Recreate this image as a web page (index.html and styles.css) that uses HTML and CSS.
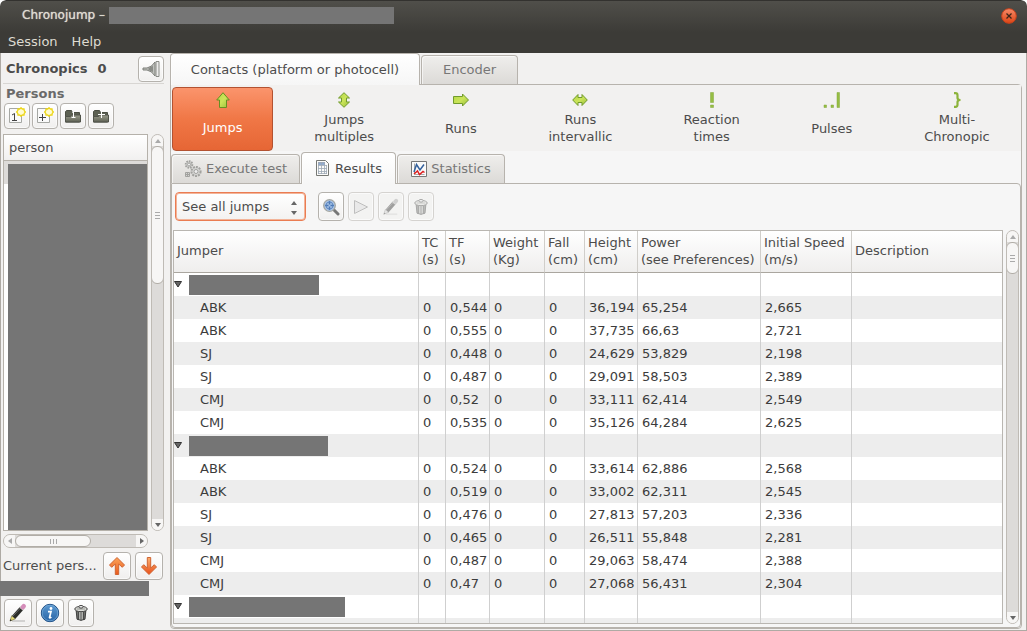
FILE: index.html
```
<!DOCTYPE html>
<html lang="en">
<head>
<meta charset="utf-8">
<title>Chronojump</title>
<link rel="stylesheet" href="styles.css">
</head>
<body>
<svg class="defs" aria-hidden="true">
  <defs>
    <linearGradient id="green" x1="0" y1="0" x2="1" y2="1"><stop offset="0" stop-color="#b2d843"/><stop offset=".5" stop-color="#cbe45a"/><stop offset="1" stop-color="#97bd38"/></linearGradient>
    <linearGradient id="orange" x1="0" y1="0" x2="0" y2="1"><stop offset="0" stop-color="#fba45a"/><stop offset="1" stop-color="#ea5a1c"/></linearGradient>
    <linearGradient id="orange-down" x1="0" y1="0" x2="0" y2="1"><stop offset="0" stop-color="#fcb070"/><stop offset="1" stop-color="#e8501a"/></linearGradient>
    <linearGradient id="close" x1="0" y1="0" x2="0" y2="1"><stop offset="0" stop-color="#f68a68"/><stop offset="1" stop-color="#dc4414"/></linearGradient>
    <linearGradient id="folder" x1="0" y1="0" x2="0" y2="1"><stop offset="0" stop-color="#9b9d8d"/><stop offset="1" stop-color="#5f6254"/></linearGradient>
    <linearGradient id="blue" x1="0" y1="0" x2="0" y2="1"><stop offset="0" stop-color="#5c9ad2"/><stop offset="1" stop-color="#2763a5"/></linearGradient>
    <linearGradient id="metal" x1="0" y1="0" x2="1" y2="0"><stop offset="0" stop-color="#555753"/><stop offset=".5" stop-color="#d8dad6"/><stop offset="1" stop-color="#555753"/></linearGradient>
    <symbol id="star" viewBox="0 0 10 10"><path d="M5 .8 6.3 2 8 1.9 8.2 3.6 9.3 5 8.2 6.4 8 8.1 6.3 8 5 9.2 3.7 8 2 8.1 1.8 6.4.7 5 1.8 3.6 2 1.9 3.7 2Z" fill="#fffbd0" stroke="#ecd514" stroke-width="1.3"/></symbol>
    <symbol id="trash" viewBox="0 0 18 20"><path d="M3.5 7h11l-1 10q-4.500 2.500-9 0z" fill="url(#metal)" stroke="#333" /><path d="M6 8.500v9M9 9v9.500M12 8.500v9" stroke="#333"/><ellipse cx="9" cy="5.500" rx="7" ry="3" fill="#dfe0dc" stroke="#333"/><path d="M4 5.500h10" stroke="#888a85"/><ellipse cx="9" cy="3" rx="2.500" ry="1.500" fill="#eee" stroke="#333"/></symbol>
    <symbol id="pencil" viewBox="0 0 20 20"><path d="M4 18h13" stroke="#0002" stroke-width="2"/><path d="M5.500 14.500 13.500 5.500" stroke="#2b2d2a" stroke-width="4.500"/><path d="M4.800 13.300 12.500 5" stroke="#666" stroke-width="1"/><path d="M13 6.100 14.500 4.400" stroke="#c9cbc7" stroke-width="4.500"/><path d="m14.800 4.200.9-1" stroke="#d58dba" stroke-width="4.500" stroke-linecap="round"/><path d="m2 18 1.700-5.200 3.500 3.100z" fill="#e8dc72" stroke="#77744a" stroke-width=".7"/><path d="m1.800 18.300.7-2 1.300 1z" fill="#222"/></symbol>
    <symbol id="open-folder" viewBox="0 0 18 18"><path d="M1.500 15v-10.500l1-1h5l1 2h7v9.500z" fill="#5d6153" stroke="#4b4e43"/><path d="M1.500 9.500h5l1-1.500h9v7h-15z" fill="url(#folder)" stroke="#50534a"/></symbol>
  </defs>
</svg>

<header class="chrome">
  <div class="titlebar">
    <span class="title">Chronojump –</span><span class="redacted redacted-title"></span>
    <button class="close" aria-label="Close"><svg width="16" height="16" viewBox="0 0 16 16"><circle cx="8" cy="8" r="7.300" fill="url(#close)" stroke="#c9421c"/><path d="m5.500 5.500 5 5m0-5-5 5" stroke="#3c2419" stroke-width="1.300"/></svg></button>
  </div>
  <nav class="menubar"><button>Session</button><button>Help</button></nav>
</header>

<main class="main">
  <aside class="side">
    <div class="chronopics">
      <strong>Chronopics</strong><strong>0</strong>
      <button class="btn" aria-label="Chronopic connection"><svg width="18" height="18" viewBox="0 0 18 18"><path d="M1 8h4q5-1 8-6v14q-3-5-8-6H1z" fill="#bfc1bd" stroke="#7c7e79"/><path d="M6 9q2-3 5-3v6q-3 0-5-3z" fill="#8a8c87"/><path d="M14 1.500h3v15h-3z" fill="#ececeb" stroke="#8a8c87"/></svg></button>
    </div>
    <h2 class="persons">Persons</h2>
    <div class="person-tools">
      <button class="btn" aria-label="New person"><svg width="18" height="18" viewBox="0 0 18 18"><path d="M1.500 1.500h12v14h-12z" fill="#fafafa" stroke="#a5a7a3"/><path d="M4 8 6.500 6.500v7M4 13.500h5" fill="none" stroke="#444"/><use href="#star" x="8" y="0" width="10" height="10"/></svg></button>
      <button class="btn" aria-label="New persons"><svg width="18" height="18" viewBox="0 0 18 18"><path d="M1.500 1.500h12v14h-12z" fill="#fafafa" stroke="#a5a7a3"/><path d="M6.500 7v7M3 10.500h7" stroke="#444"/><use href="#star" x="8" y="0" width="10" height="10"/></svg></button>
      <button class="btn" aria-label="Load person"><svg width="18" height="18" viewBox="0 0 18 18"><use href="#open-folder"/><path d="M8 5.500 9.500 4.500v6M7.500 10.500h4" fill="none" stroke="#fff"/></svg></button>
      <button class="btn" aria-label="Load persons"><svg width="18" height="18" viewBox="0 0 18 18"><use href="#open-folder"/><path d="M9.500 4v7M6 7.500h7" stroke="#fff"/></svg></button>
    </div>
    <div class="person-area">
      <div class="person-list"><div class="list-head">person</div><div class="list-body"><span class="redacted"></span></div></div>
      <div class="scroll scroll-v"><i class="step"><svg width="6" height="4"><path d="m0 4 3-4 3 4z"/></svg></i><div class="thumb thumb-long"></div><i class="step end"><svg width="6" height="4"><path d="m0 0 3 4 3-4z"/></svg></i></div>
      <div class="scroll scroll-h"><i class="step"><svg width="4" height="6"><path d="M4 0 0 3l4 3z"/></svg></i><div class="thumb"></div><i class="step end"><svg width="4" height="6"><path d="m0 0 4 3-4 3z"/></svg></i></div>
    </div>
    <div class="current">
      <span>Current pers...</span>
      <button class="btn" aria-label="Previous person"><svg width="18" height="20" viewBox="0 0 18 20"><path d="M9 1.500 1.500 9l2.200 2.300L7.300 8v10.500h3.400V8l3.600 3.300L16.500 9z" fill="url(#orange)" stroke="#cf6432" stroke-linejoin="round"/></svg></button>
      <button class="btn" aria-label="Next person"><svg width="18" height="20" viewBox="0 0 18 20"><path d="M9 18.500 1.500 11l2.200-2.300L7.300 12V1.500h3.400V12l3.600-3.300L16.500 11z" fill="url(#orange-down)" stroke="#cf6432" stroke-linejoin="round"/></svg></button>
    </div>
    <span class="redacted redacted-name"></span>
    <div class="person-actions">
      <button class="btn" aria-label="Edit person"><svg width="20" height="20"><use href="#pencil"/></svg></button>
      <button class="btn" aria-label="Person information"><svg width="20" height="20" viewBox="0 0 20 20"><circle cx="10" cy="10" r="8.700" fill="url(#blue)" stroke="#1e4f87"/><circle cx="10" cy="10" r="7.800" fill="none" stroke="#79add9" stroke-width=".7"/><circle cx="11" cy="5.500" r="1.400" fill="#fff"/><path d="M8 8.700h3L9.500 14.500q.500.800 1.800-.5" fill="none" stroke="#fff" stroke-width="1.700"/></svg></button>
      <button class="btn" aria-label="Delete person"><svg width="16" height="18"><use href="#trash"/></svg></button>
    </div>
  </aside>

  <section class="book">
    <div class="tabs" role="tablist">
      <button class="tab active tab-contacts" role="tab">Contacts (platform or photocell)</button>
      <button class="tab tab-encoder" role="tab">Encoder</button>
    </div>
    <div class="page">
      <fieldset class="modes" aria-label="Test type">
        <label class="mode"><input type="radio" name="mode" checked><svg width="16" height="16" viewBox="0 0 16 16"><path d="M8 .700 14.300 8H11.500v7.500h-7V8H1.700z" fill="url(#green)" stroke="#668f22"/></svg><span>Jumps</span></label>
        <label class="mode"><input type="radio" name="mode"><svg width="16" height="16" viewBox="0 0 16 16"><path d="M8 .700 13.500 6h-3v4h3L8 15.300 2.500 10h3V6h-3z" fill="url(#green)" stroke="#719b2d"/></svg><span>Jumps<br>multiples</span></label>
        <label class="mode"><input type="radio" name="mode"><svg width="16" height="16" viewBox="0 0 16 16"><path d="M15.500 8 9.500 14v-2.500h-9v-7h9V2z" fill="url(#green)" stroke="#719b2d"/></svg><span>Runs</span></label>
        <label class="mode"><input type="radio" name="mode"><svg width="16" height="16" viewBox="0 0 16 16"><path d="M.7 8 6 2.500v3h4v-3L15.300 8 10 13.500v-3H6v3z" fill="url(#green)" stroke="#719b2d"/></svg><span>Runs<br>intervallic</span></label>
        <label class="mode"><input type="radio" name="mode"><svg width="16" height="16" viewBox="0 0 16 16"><path d="M6.500.500h3v10h-3zM6.500 13h3v2.500h-3z" fill="#96bd43" stroke="#83a93a" stroke-width=".5"/></svg><span>Reaction<br>times</span></label>
        <label class="mode"><input type="radio" name="mode"><svg width="18" height="16" viewBox="0 0 18 16"><path d="M1 13h2.500v2.500H1zM8 13h2.500v2.500H8zM14 .500h2.500v15H14z" fill="#96bd43" stroke="#83a93a" stroke-width=".5"/></svg><span>Pulses</span></label>
        <label class="mode"><input type="radio" name="mode"><svg width="16" height="16" viewBox="0 0 16 16"><path d="M5 1.200h1.500q2 0 2 2V6q0 2 3 2-3 0-3 2v2.800q0 2-2 2H5" fill="none" stroke="#8cb33b" stroke-width="2.200"/></svg><span>Multi-<br>Chronopic</span></label>
      </fieldset>

      <div class="tabs subtabs" role="tablist">
        <button class="tab tab-execute" role="tab"><svg width="18" height="18" viewBox="0 0 18 18"><g fill="#d4d4d2" stroke="#a2a29f"><circle cx="5" cy="4.500" r="3.300" stroke-width="2" stroke-dasharray="1.600 .900"/><circle cx="5" cy="4.500" r="1.500" fill="#eee"/><circle cx="12" cy="11.500" r="4.600" stroke-width="2" stroke-dasharray="2 1"/><circle cx="12" cy="11.500" r="2" fill="#eee"/><path d="M1.500 12.500h4v4h-4zM1.500 14.500h4M3.500 12.500v4" /></g></svg>Execute test</button>
        <button class="tab active tab-results" role="tab"><svg width="16" height="18" viewBox="0 0 16 18"><path d="M1.500 1.500h9l3 3v12h-12z" fill="#fbfbfa" stroke="#777975"/><path d="M3 3h7v3H3z" fill="#91abd0"/><path d="M3 3.500h7M3 6.500h9M3 9.500h9M3 12.500h9M3 14.500h9M3.500 3v12M6.500 3v12M9.500 3v12M11.500 6v9" stroke="#9da8b5" stroke-width=".8"/></svg>Results</button>
        <button class="tab tab-statistics" role="tab"><svg width="16" height="16" viewBox="0 0 16 16"><path d="M.5.500h15v15H.500z" fill="#fafafa" stroke="#777"/><path d="M3.500 2.500v11h10" fill="none" stroke="#aaa"/><path d="M3 11 5.500 3.500 9 9l4-5.500" fill="none" stroke="#34619d" stroke-width="1.500"/><path d="m3 13 3.500-3 2 3.500 3.500-3 1.500 1" fill="none" stroke="#dd1e1e" stroke-width="1.500"/></svg>Statistics</button>
      </div>

      <div class="subpage">
        <div class="toolbar">
          <div class="combo"><select aria-label="Jump type"><option>See all jumps</option></select><svg width="6" height="14" viewBox="0 0 6 14"><path d="m0 4 3-4 3 4zM0 10l3 4 3-4z" fill="#666"/></svg></div>
          <button class="btn" aria-label="Zoom"><svg width="18" height="18" viewBox="0 0 18 18"><path d="m12 12 4 4" stroke="#777" stroke-width="3" stroke-linecap="round"/><circle cx="7.500" cy="7.500" r="5.800" fill="#a9c4e8" stroke="#a5a7a2" stroke-width="1.300"/><path d="M7.500 3v9M3 7.500h9" stroke="#4a78b5" stroke-width="1.500" stroke-dasharray="3.500 2"/><circle cx="7.500" cy="7.500" r="3.500" fill="none" stroke="#5f88bf"/></svg></button>
          <button class="btn" disabled aria-label="Play"><svg width="18" height="18" viewBox="0 0 18 18"><path d="m2.500 2.500 13 6.500-13 6.500z" fill="#ddd" stroke="#777" stroke-linejoin="round"/></svg></button>
          <button class="btn" disabled aria-label="Edit"><svg class="grey" width="18" height="18"><use href="#pencil"/></svg></button>
          <button class="btn" disabled aria-label="Delete"><svg width="16" height="18"><use href="#trash"/></svg></button>
        </div>
        <div class="results">
          <div class="table-wrap">
            <table>
              <colgroup><col class="c-jumper"><col class="c-tc"><col class="c-tf"><col class="c-weight"><col class="c-fall"><col class="c-height"><col class="c-power"><col class="c-speed"><col></colgroup>
              <thead><tr><th>Jumper</th><th>TC<br>(s)</th><th>TF<br>(s)</th><th>Weight<br>(Kg)</th><th>Fall<br>(cm)</th><th>Height<br>(cm)</th><th>Power<br>(see Preferences)</th><th>Initial Speed<br>(m/s)</th><th>Description</th></tr></thead>
              <tbody>
                <tr class="group"><td><div><svg width="8" height="7"><path d="M.5.500h7L4 6z"/></svg><span class="redacted r1"></span></div></td><td></td><td></td><td></td><td></td><td></td><td></td><td></td><td></td></tr>
                <tr><td>ABK</td><td>0</td><td>0,544</td><td>0</td><td>0</td><td>36,194</td><td>65,254</td><td>2,665</td><td></td></tr>
                <tr><td>ABK</td><td>0</td><td>0,555</td><td>0</td><td>0</td><td>37,735</td><td>66,63</td><td>2,721</td><td></td></tr>
                <tr><td>SJ</td><td>0</td><td>0,448</td><td>0</td><td>0</td><td>24,629</td><td>53,829</td><td>2,198</td><td></td></tr>
                <tr><td>SJ</td><td>0</td><td>0,487</td><td>0</td><td>0</td><td>29,091</td><td>58,503</td><td>2,389</td><td></td></tr>
                <tr><td>CMJ</td><td>0</td><td>0,52</td><td>0</td><td>0</td><td>33,111</td><td>62,414</td><td>2,549</td><td></td></tr>
                <tr><td>CMJ</td><td>0</td><td>0,535</td><td>0</td><td>0</td><td>35,126</td><td>64,284</td><td>2,625</td><td></td></tr>
                <tr class="group"><td><div><svg width="8" height="7"><path d="M.5.500h7L4 6z"/></svg><span class="redacted r2"></span></div></td><td></td><td></td><td></td><td></td><td></td><td></td><td></td><td></td></tr>
                <tr><td>ABK</td><td>0</td><td>0,524</td><td>0</td><td>0</td><td>33,614</td><td>62,886</td><td>2,568</td><td></td></tr>
                <tr><td>ABK</td><td>0</td><td>0,519</td><td>0</td><td>0</td><td>33,002</td><td>62,311</td><td>2,545</td><td></td></tr>
                <tr><td>SJ</td><td>0</td><td>0,476</td><td>0</td><td>0</td><td>27,813</td><td>57,203</td><td>2,336</td><td></td></tr>
                <tr><td>SJ</td><td>0</td><td>0,465</td><td>0</td><td>0</td><td>26,511</td><td>55,848</td><td>2,281</td><td></td></tr>
                <tr><td>CMJ</td><td>0</td><td>0,487</td><td>0</td><td>0</td><td>29,063</td><td>58,474</td><td>2,388</td><td></td></tr>
                <tr><td>CMJ</td><td>0</td><td>0,47</td><td>0</td><td>0</td><td>27,068</td><td>56,431</td><td>2,304</td><td></td></tr>
                <tr class="group"><td><div><svg width="8" height="7"><path d="M.5.500h7L4 6z"/></svg><span class="redacted r3"></span></div></td><td></td><td></td><td></td><td></td><td></td><td></td><td></td><td></td></tr>
                <tr><td></td><td></td><td></td><td></td><td></td><td></td><td></td><td></td><td></td></tr>
              </tbody>
            </table>
          </div>
          <div class="scroll scroll-v"><i class="step"><svg width="6" height="4"><path d="m0 4 3-4 3 4z"/></svg></i><div class="thumb thumb-short"></div><i class="step end"><svg width="6" height="4"><path d="m0 0 3 4 3-4z"/></svg></i></div>
        </div>
      </div>
    </div>
  </section>
</main>
</body>
</html>
```
FILE: styles.css
```
* { box-sizing: border-box; }
html { background: #fff; }
body {
  margin: 0;
  height: 100vh;
  display: flex;
  flex-direction: column;
  overflow: hidden;
  background: #f2f1f0;
  border-radius: 6px 6px 0 0;
  color: #4c4c4c;
  font: 13px/17px "DejaVu Sans", sans-serif;
}
button, select, input { font: inherit; color: inherit; }
button { padding: 0; border: 0; background: none; white-space: nowrap; }
svg { display: block; flex: none; }
.defs { position: absolute; width: 0; height: 0; }
.redacted { display: block; background: #757575; }

/* window chrome */
.chrome {
  flex: none;
  height: 53px;
  background: linear-gradient(#504f4a, #3c3b37 60%);
  border-top: 1px solid #33322f;
  border-radius: 6px 6px 0 0;
  color: #dfdbd2;
}
.titlebar { display: flex; align-items: center; height: 29px; padding: 0 10px 0 22px; }
.title { width: 87px; font-size: 12px; text-shadow: 0 0 1px #dfdbd2; }
.redacted-title { width: 285px; height: 17px; }
.close { margin-left: auto; }
.menubar { display: flex; gap: 14px; padding: 3px 8px; }

/* window body */
.main {
  flex: 1;
  min-height: 0;
  display: flex;
  border: solid #aeaaa4;
  border-width: 0 1px 1px;
}
.side { flex: none; width: 169px; display: flex; flex-direction: column; padding: 1px 6px 3px 2px; }
.btn {
  flex: none;
  display: grid;
  place-items: center;
  width: 26px;
  height: 26px;
  border: 1px solid #b5b2ad;
  border-radius: 4px;
  background: linear-gradient(#fff, #f0efee);
  box-shadow: inset 0 0 0 1px #fff9;
}
.btn:disabled { border-color: #d5d3d0; background: #f3f3f2; }
.btn:disabled svg { opacity: .42; }
.grey { filter: grayscale(1); }
.chronopics { display: flex; align-items: center; gap: 10px; height: 30px; padding: 0 0 0 3px; border-bottom: 1px solid #d8d6d3; }
.chronopics .btn { margin-left: auto; }
.persons { margin: 1px 3px; font-size: 13px; color: #6a6a6a; }
.person-tools { display: flex; gap: 2px; padding: 0 1px 5px; }
.person-area { flex: 1; min-height: 0; display: grid; grid-template: minmax(0, 1fr) 14px / minmax(0, 1fr) 13px; gap: 3px; }
.person-list { display: flex; flex-direction: column; border: 1px solid #b5b1aa; background: #fff; }
.list-head { padding: 4px 5px; border-bottom: 1px solid #b5b1aa; background: linear-gradient(#fff, #f1f0ef); }
.list-body { flex: 1; padding: 3px 0 0 4px; background: linear-gradient(#dddbd9 23px, #fff 23px); }
.list-body .redacted { height: 100%; }

.scroll { display: flex; border: 1px solid #bfbbb5; border-radius: 7px; background: #dddbd9; overflow: hidden; }
.scroll-v { flex-direction: column; width: 13px; }
.scroll-h { height: 14px; }
.step { flex: none; display: grid; place-items: center; width: 11px; height: 11px; background: #f7f6f5; }
.step svg { fill: #aaa; }
.end svg { fill: #666; }
.thumb { flex: none; border: 1px solid #b1ada7; border-radius: 6px; background: #f7f6f5 repeating-linear-gradient(#aaa 0 1px, transparent 1px 3px) center / 5px 7px no-repeat; }
.scroll-v .thumb { width: 13px; margin: 0 -1px; }
.scroll .end { margin-top: auto; }
.scroll-h .end { margin: 0 0 0 auto; }
.scroll-h .thumb { width: 76px; background-image: repeating-linear-gradient(90deg, #aaa 0 1px, transparent 1px 3px); background-size: 7px 5px; }
.scroll-h .step { height: 12px; }
.thumb-long { height: 138px; }
.thumb-short { height: 32px; }

.current { display: flex; align-items: center; gap: 4px; padding: 4px 1px 0 0; }
.current span { flex: 1; padding-bottom: 2px; white-space: nowrap; }
.current .btn, .person-actions .btn { width: 28px; height: 28px; }
.redacted-name { width: 149px; height: 15px; margin: 1px 0 3px -3px; }
.person-actions { display: flex; gap: 4px; padding: 0 1px; }
.person-actions .btn:last-child { width: 26px; }

/* notebook */
.book { flex: 1; min-width: 0; display: flex; flex-direction: column; padding: 0 4px 1px 0; }
.tabs { position: relative; z-index: 1; display: flex; align-items: flex-end; gap: 1px; flex: none; }
.tab {
  display: flex;
  align-items: center;
  justify-content: center;
  gap: 4px;
  height: 29px;
  padding-bottom: 1px;
  border: 1px solid #b7b3ad;
  border-bottom: 0;
  border-radius: 4px 4px 0 0;
  background: linear-gradient(#efeeec, #dcdad7);
  color: #777;
  box-shadow: inset 1px 1px #fff9;
}
.tab.active { height: 32px; margin-bottom: -1px; background: linear-gradient(#fff, #f6f6f6); color: #4c4c4c; }
.tab-contacts { width: 250px; }
.tab-encoder { width: 97px; }
.page {
  flex: 1;
  min-height: 0;
  display: flex;
  flex-direction: column;
  border: 1px solid #b7b3ad;
  border-radius: 0 4px 4px 4px;
  background: #f6f6f6;
}
.modes {
  display: grid;
  grid-template-columns: 101fr 142fr 91fr 148fr 114fr 126fr 124fr;
  flex: none;
  min-width: 0;
  margin: 0;
  padding: 2px 2px 0 1px;
  border: 0;
  background: #f2f1f0;
}
.mode { display: flex; flex-direction: column; align-items: center; height: 64px; padding-top: 5px; border-radius: 4px; text-align: center; }
.mode input { position: absolute; opacity: 0; margin: 0; }
.mode span { flex: 1; display: flex; align-items: center; padding-bottom: 3px; }
.mode:has(:checked) { border: 1px solid #b35231; padding-top: 4px; background: linear-gradient(#fb946c, #f07746 50%, #e66635); color: #fff; }
.subtabs { padding-top: 1px; }
.tab-execute { width: 129px; }
.tab-results { width: 95px; }
.tab-statistics { width: 108px; }
.subpage {
  flex: 1;
  min-height: 0;
  display: flex;
  flex-direction: column;
  padding: 8px 1px 3px;
  border: 1px solid #b7b3ad;
  border-radius: 0 4px 4px 4px;
}
.toolbar { display: flex; gap: 4px; padding: 0 2px 9px; }
.toolbar .btn { height: 29px; }
.combo { position: relative; width: 131px; margin-right: 8px; }
.combo select { width: 100%; height: 29px; padding: 0 6px; appearance: none; border: 1px solid #ea7c52; border-radius: 4px; outline: 0; background: linear-gradient(#fff, #f3f2f1); box-shadow: inset 0 0 0 1px #f3b499; }
.combo svg { position: absolute; right: 9px; top: 9px; pointer-events: none; }
.results { flex: 1; min-height: 0; display: flex; gap: 3px; }
.table-wrap { flex: 1; min-width: 0; border: 1px solid #b9b6b1; background: #fff; overflow: hidden; }
table { width: 100%; table-layout: fixed; border-collapse: separate; border-spacing: 0; }
.c-jumper { width: 245px; }
.c-tc { width: 27px; }
.c-tf { width: 44px; }
.c-weight { width: 55px; }
.c-fall { width: 40px; }
.c-height { width: 53px; }
.c-power { width: 123px; }
.c-speed { width: 91px; }
th { height: 42px; padding: 0 3px 2px; border: solid #d0ceca; border-width: 0 1px 0 0; border-bottom: 1px solid #aaa69f; background: linear-gradient(#fff, #efeeed); font-weight: 400; text-align: left; white-space: nowrap; }
td { height: 23px; padding: 0 4px; border-right: 1px solid #cfcfcf; color: #3c3c3c; white-space: nowrap; }
th:last-child, td:last-child { border-right: 0; }
td:first-child { padding-left: 26px; }
tbody tr:nth-child(even) { background: #ededed; }
.group td:first-child { padding-left: 0; }
.group div { display: flex; align-items: center; gap: 7px; }
.group svg { fill: #666; stroke: #333; }
.group .redacted { height: 20px; }
.r1 { width: 130px; }
.r2 { width: 139px; }
.r3 { width: 156px; }
```
